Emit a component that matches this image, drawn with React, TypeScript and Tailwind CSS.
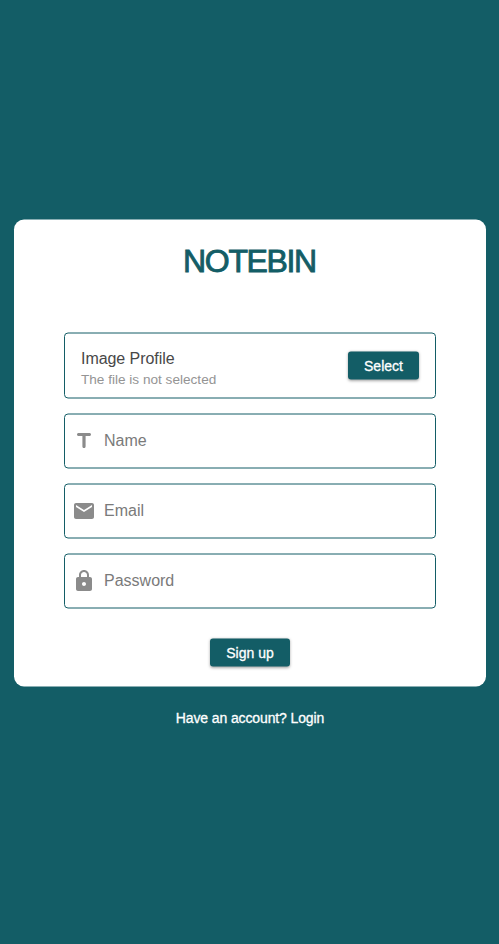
import React from "react";

const icons = {
  name: "M5 5.5C5 6.33 5.67 7 6.5 7h3.9v10.4c0 .88.72 1.6 1.6 1.6s1.6-.72 1.6-1.6V7h3.9c.83 0 1.5-.67 1.5-1.5S18.33 4 17.5 4h-11C5.67 4 5 4.67 5 5.5z",
  email:
    "M20 4H4c-1.1 0-1.99.9-1.99 2L2 18c0 1.1.9 2 2 2h16c1.1 0 2-.9 2-2V6c0-1.1-.9-2-2-2zm0 4-8 5-8-5V6l8 5 8-5v2z",
  password:
    "M18 8h-1V6c0-2.76-2.24-5-5-5S7 3.24 7 6v2H6c-1.1 0-2 .9-2 2v10c0 1.1.9 2 2 2h12c1.1 0 2-.9 2-2V10c0-1.1-.9-2-2-2zm-6 9c-1.1 0-2-.9-2-2s.9-2 2-2 2 .9 2 2-.9 2-2 2zM9 8V6c0-1.66 1.34-3 3-3s3 1.34 3 3v2H9z",
};

function Field({ icon, label }: { icon: string; label: string }) {
  return (
    <label className="flex h-[55px] items-center rounded border border-[#135d66] pl-[7px]">
      <svg viewBox="0 0 24 24" className="size-6 -translate-y-[0.5px] fill-[#8b8b8b]">
        <path d={icon} />
      </svg>
      <span className="ml-2 -translate-y-[0.5px] text-base leading-6 text-[#7a7a7a]">{label}</span>
    </label>
  );
}

function Button({ children, className }: { children: React.ReactNode; className: string }) {
  return (
    <button
      className={`h-7 rounded-[3px] bg-[#135d66] text-sm leading-5 text-white shadow-[0_1px_3px_rgba(0,0,0,0.35)] [-webkit-text-stroke:0.3px_white] ${className}`}
    >
      {children}
    </button>
  );
}

export default function App() {
  return (
    <main className="flex h-[944px] w-[499px] flex-col bg-[#135d66] pt-[219px] font-['Liberation_Sans',Arial,sans-serif]">
      <div className="ml-[14px] flex w-[472px] translate-y-[0.5px] flex-col items-center">
        <form className="flex h-[467px] w-full flex-col items-center rounded-[10px] bg-white px-[50px] pt-[23px]">
          <h1 className="h-[90px] pr-px text-[32px] leading-9 tracking-[-1.35px] text-[#135d66] [-webkit-text-stroke:0.9px_#135d66]">
            NOTEBIN
          </h1>
          <div className="flex w-full flex-col gap-[15px]">
            <div className="flex h-[66px] items-center justify-between rounded border border-[#135d66] px-4">
              <div className="pt-[6px]">
                <p className="text-base leading-[22px] tracking-[-0.05px] text-[#484848]">Image Profile</p>
                <p className="text-[13.6px] leading-5 text-[#949494]">The file is not selected</p>
              </div>
              <Button className="w-[71px]">Select</Button>
            </div>
            <Field icon={icons.name} label="Name" />
            <Field icon={icons.email} label="Email" />
            <Field icon={icons.password} label="Password" />
          </div>
          <Button className="mt-[30px] w-20">Sign up</Button>
        </form>
        <p className="mt-[21px] text-sm leading-5 tracking-[-0.12px] text-white [-webkit-text-stroke:0.3px_white]">
          Have an account? Login
        </p>
      </div>
    </main>
  );
}
